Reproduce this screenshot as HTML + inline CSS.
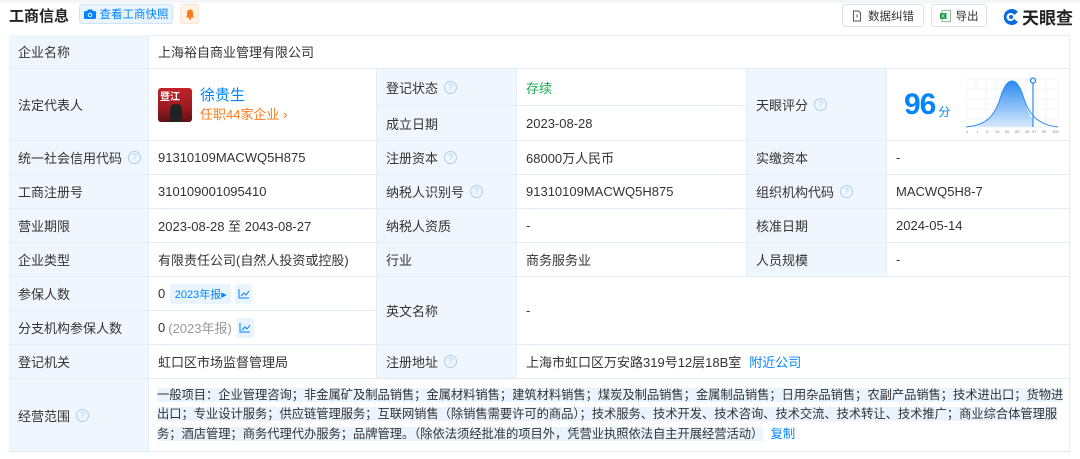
<!DOCTYPE html>
<html><head><meta charset="utf-8"><style>
*{margin:0;padding:0;box-sizing:border-box}
body{width:1080px;height:459px;background:#fff;font-family:"Liberation Sans","Noto Sans CJK SC",sans-serif;color:#333;font-size:13px;position:relative;overflow:hidden}
.c{position:absolute;display:flex;align-items:center;padding-left:9px;border-right:1px solid #e4ecf5;border-bottom:1px solid #e4ecf5;white-space:nowrap}
.l{background:#f0f6fd;color:#333}
.q{display:inline-block;width:13px;height:13px;border:1px solid #a9cdf1;border-radius:50%;color:#a9cdf1;font-size:9px;line-height:11px;text-align:center;margin-left:6px}
.b{color:#0084ff}
.tag{display:inline-flex;align-items:center;justify-content:center;background:#eaf4fe;border-radius:3px;height:20px}
</style></head><body>
<div style="position:absolute;left:0;top:0;width:1080px;height:3px;background:#f3f5f8"></div>
<div style="position:absolute;left:9px;top:5px;font-size:15px;font-weight:bold;color:#222">工商信息</div>
<div style="position:absolute;left:79px;top:4px;width:94px;height:20px;background:#eaf4fe;border:1px solid #cfe4fb;border-radius:3px;color:#0084ff;font-size:11.5px;display:flex;align-items:center;justify-content:center">
<svg width="12" height="10" viewBox="0 0 12 10" style="margin-right:4px"><rect x="0" y="2" width="12" height="8" rx="1.5" fill="#0084ff"/><rect x="3.5" y="0.5" width="5" height="2.5" fill="#0084ff"/><circle cx="6" cy="6" r="2.2" fill="#fff"/><circle cx="6" cy="6" r="1.3" fill="#0084ff"/></svg>查看工商快照</div>
<div style="position:absolute;left:180px;top:4px;width:19px;height:20px;background:#fff2e6;border:1px solid #fde3cc;border-radius:3px;display:flex;align-items:center;justify-content:center">
<svg width="10" height="11" viewBox="0 0 10 11"><path d="M5 0.5C2.8 0.5 2 2.3 2 4v3L0.8 8.5h8.4L8 7V4C8 2.3 7.2 0.5 5 0.5z" fill="#ff7a1a"/><circle cx="5" cy="9.6" r="1.2" fill="#ff7a1a"/></svg></div>
<div style="position:absolute;left:842px;top:4px;width:82px;height:23px;border:1px solid #dde2e8;border-radius:3px;display:flex;align-items:center;justify-content:center;font-size:11.5px;color:#333"><svg width="10" height="12" viewBox="0 0 10 12" style="margin-right:6px"><path d="M1.5 1h5l2 2v8h-7z" fill="none" stroke="#555" stroke-width="1"/><path d="M5 4.5v3" stroke="#555"/></svg>数据纠错</div>
<div style="position:absolute;left:931px;top:4px;width:56px;height:23px;border:1px solid #dde2e8;border-radius:3px;display:flex;align-items:center;justify-content:center;font-size:11.5px;color:#333"><svg width="11" height="12" viewBox="0 0 11 12" style="margin-right:5px"><rect x="2" y="0.5" width="8.5" height="11" fill="#fff" stroke="#8bc58b"/><rect x="0" y="3" width="6.5" height="6" fill="#1f9e48"/><text x="1.2" y="8.2" font-size="5.5" fill="#fff" font-family="Liberation Sans">X</text></svg>导出</div>
<div style="position:absolute;left:1001px;top:4px;display:flex;align-items:center"><svg width="20" height="20" viewBox="0 0 20 20"><path d="M17 5A8 8 0 1 0 17 15L13 12A4 4 0 1 1 13 8z" fill="#0a6ce0"/><circle cx="10" cy="10" r="2" fill="#0a6ce0"/></svg><span style="font-size:17px;font-weight:bold;color:#222;margin-left:1px">天眼查</span></div>

<div style="position:absolute;left:9px;top:35px;width:1061px;height:417px;border:1px solid #e4ecf5;border-right:none;border-bottom:none"></div>

<div class="c l" style="left:9px;top:35px;width:140px;height:34px">企业名称</div>
<div class="c" style="left:149px;top:35px;width:921px;height:34px">上海裕自商业管理有限公司</div>
<div class="c l" style="left:9px;top:69px;width:140px;height:72px">法定代表人</div>
<div class="c" style="left:149px;top:69px;width:228px;height:72px">
<div style="width:34px;height:34px;border-radius:3px;background:linear-gradient(180deg,#c2222a 0%,#9a1a20 60%,#5a1214 100%);position:relative;overflow:hidden"><span style="position:absolute;left:2px;top:0;color:#fff;font-size:10px;font-weight:bold">暨江</span><div style="position:absolute;left:12px;top:16px;width:12px;height:18px;background:#222;border-radius:5px 5px 0 0"></div></div>
<div style="margin-left:8px"><div style="color:#0084ff;font-size:15px;line-height:19px">徐贵生</div><div style="color:#ff7a1a;font-size:13px;line-height:19px">任职44家企业 ›</div></div></div>
<div class="c l" style="left:377px;top:69px;width:140px;height:37px">登记状态<span class="q">?</span></div>
<div class="c" style="left:517px;top:69px;width:230px;height:37px;color:#1aaa55">存续</div>
<div class="c l" style="left:377px;top:106px;width:140px;height:35px">成立日期</div>
<div class="c" style="left:517px;top:106px;width:230px;height:35px">2023-08-28</div>
<div class="c l" style="left:747px;top:69px;width:140px;height:72px">天眼评分<span class="q">?</span></div>
<div class="c" style="left:887px;top:69px;width:183px;height:72px;padding-left:17px">
<span style="font-size:30px;font-weight:bold;color:#0084ff;letter-spacing:-1px">96</span><span style="color:#0084ff;font-size:12px;margin-left:3px;margin-top:14px">分</span>
<svg width="96" height="58" viewBox="0 0 96 58" style="position:absolute;left:79px;top:8px">
<g stroke="#eef1f5" stroke-width="0.7"><path d="M0 2h92M0 12h92M0 22h92M0 32h92M0 42h92M0 50h92M0 2v48M10 2v48M20 2v48M30 2v48M40 2v48M50 2v48M60 2v48M70 2v48M80 2v48M92 2v48"/></g>
<defs><linearGradient id="g" x1="0" y1="0" x2="0" y2="1"><stop offset="0" stop-color="#2a8af0"/><stop offset="1" stop-color="#d7e9fd"/></linearGradient></defs>
<path d="M0 50C20 48 28 40 34 22C38 8 42 4 46 4C50 4 54 8 58 22C62 36 66 42 67 42V50Z" fill="url(#g)"/>
<path d="M0 50C20 48 28 40 34 22C38 8 42 4 46 4C50 4 54 8 58 22C64 40 74 48 92 50" fill="none" stroke="#2a8af0" stroke-width="1"/>
<path d="M67 4V50" stroke="#2a8af0" stroke-width="1.2"/><circle cx="67" cy="3.5" r="2.5" fill="#fff" stroke="#2a8af0" stroke-width="1.3"/>
<g font-size="4" fill="#888" font-family="Liberation Sans"><text x="0" y="56">0</text><text x="10" y="56">1</text><text x="20" y="56">5</text><text x="29" y="56">15</text><text x="39" y="56">50</text><text x="49" y="56">85</text><text x="59" y="56">95</text><text x="66" y="56">97</text><text x="76" y="56">99</text><text x="86" y="56">100</text></g></svg></div>

<div class="c l" style="left:9px;top:141px;width:140px;height:34px">统一社会信用代码<span class="q">?</span></div>
<div class="c" style="left:149px;top:141px;width:228px;height:34px">91310109MACWQ5H875</div>
<div class="c l" style="left:377px;top:141px;width:140px;height:34px">注册资本<span class="q">?</span></div>
<div class="c" style="left:517px;top:141px;width:230px;height:34px">68000万人民币</div>
<div class="c l" style="left:747px;top:141px;width:140px;height:34px">实缴资本</div>
<div class="c" style="left:887px;top:141px;width:183px;height:34px">-</div>

<div class="c l" style="left:9px;top:175px;width:140px;height:34px">工商注册号</div>
<div class="c" style="left:149px;top:175px;width:228px;height:34px">310109001095410</div>
<div class="c l" style="left:377px;top:175px;width:140px;height:34px">纳税人识别号<span class="q">?</span></div>
<div class="c" style="left:517px;top:175px;width:230px;height:34px">91310109MACWQ5H875</div>
<div class="c l" style="left:747px;top:175px;width:140px;height:34px">组织机构代码<span class="q">?</span></div>
<div class="c" style="left:887px;top:175px;width:183px;height:34px">MACWQ5H8-7</div>

<div class="c l" style="left:9px;top:209px;width:140px;height:34px">营业期限</div>
<div class="c" style="left:149px;top:209px;width:228px;height:34px">2023-08-28 至 2043-08-27</div>
<div class="c l" style="left:377px;top:209px;width:140px;height:34px">纳税人资质</div>
<div class="c" style="left:517px;top:209px;width:230px;height:34px">-</div>
<div class="c l" style="left:747px;top:209px;width:140px;height:34px">核准日期</div>
<div class="c" style="left:887px;top:209px;width:183px;height:34px">2024-05-14</div>

<div class="c l" style="left:9px;top:243px;width:140px;height:34px">企业类型</div>
<div class="c" style="left:149px;top:243px;width:228px;height:34px">有限责任公司(自然人投资或控股)</div>
<div class="c l" style="left:377px;top:243px;width:140px;height:34px">行业</div>
<div class="c" style="left:517px;top:243px;width:230px;height:34px">商务服务业</div>
<div class="c l" style="left:747px;top:243px;width:140px;height:34px">人员规模</div>
<div class="c" style="left:887px;top:243px;width:183px;height:34px">-</div>

<div class="c l" style="left:9px;top:277px;width:140px;height:34px">参保人数</div>
<div class="c" style="left:149px;top:277px;width:228px;height:34px">0<span class="tag" style="margin-left:5px;width:61px;color:#0084ff;font-size:11px">2023年报▸</span><span class="tag" style="margin-left:4px;width:17px"><svg width="12" height="11" viewBox="0 0 12 11"><path d="M1 1v9h10" fill="none" stroke="#0084ff"/><path d="M3 8l3-3 2 2 3-4" fill="none" stroke="#0084ff"/></svg></span></div>
<div class="c l" style="left:9px;top:311px;width:140px;height:34px">分支机构参保人数</div>
<div class="c" style="left:149px;top:311px;width:228px;height:34px">0 <span style="color:#999;margin-left:3px">(2023年报)</span><span class="tag" style="margin-left:5px;width:17px"><svg width="12" height="11" viewBox="0 0 12 11"><path d="M1 1v9h10" fill="none" stroke="#0084ff"/><path d="M3 8l3-3 2 2 3-4" fill="none" stroke="#0084ff"/></svg></span></div>
<div class="c l" style="left:377px;top:277px;width:140px;height:68px">英文名称</div>
<div class="c" style="left:517px;top:277px;width:553px;height:68px">-</div>

<div class="c l" style="left:9px;top:345px;width:140px;height:34px">登记机关</div>
<div class="c" style="left:149px;top:345px;width:228px;height:34px">虹口区市场监督管理局</div>
<div class="c l" style="left:377px;top:345px;width:140px;height:34px">注册地址<span class="q">?</span></div>
<div class="c" style="left:517px;top:345px;width:553px;height:34px">上海市虹口区万安路319号12层18B室<span class="b" style="margin-left:8px">附近公司</span></div>

<div class="c l" style="left:9px;top:379px;width:140px;height:73px">经营范围<span class="q">?</span></div>
<div class="c" style="left:149px;top:379px;width:921px;height:73px;white-space:normal;padding-left:8px;padding-right:0">
<div style="line-height:19.5px;font-size:12.3px;letter-spacing:-0.05px;color:#333"><span style="background:#eaf4fe">一般项目：企业管理咨询；非金属矿及制品销售；金属材料销售；建筑材料销售；煤炭及制品销售；金属制品销售；日用杂品销售；农副产品销售；技术进出口；货物进出口；专业设计服务；供应链管理服务；互联网销售（除销售需要许可的商品）；技术服务、技术开发、技术咨询、技术交流、技术转让、技术推广；商业综合体管理服务；酒店管理；商务代理代办服务；品牌管理。（除依法须经批准的项目外，凭营业执照依法自主开展经营活动）</span> <span class="b" style="margin-left:4px">复制</span></div></div>
</body></html>
